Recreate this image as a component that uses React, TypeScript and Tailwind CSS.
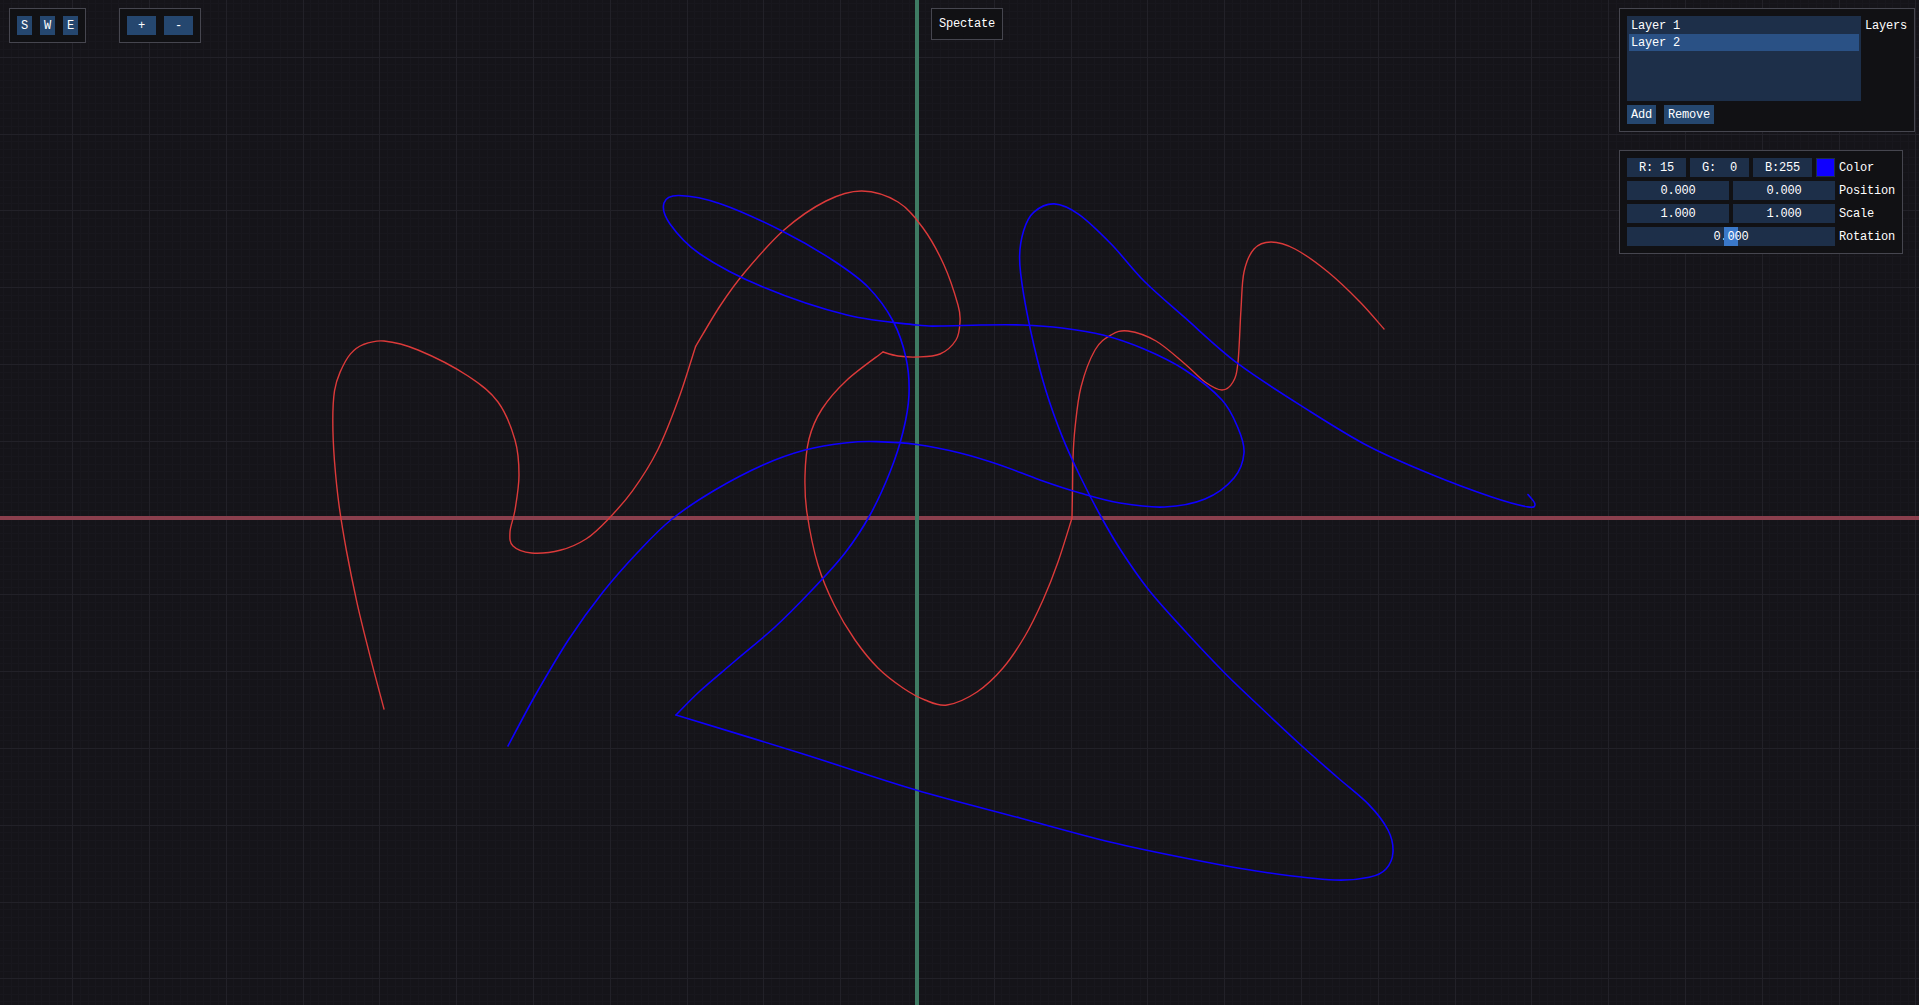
type Pt = [number, number];

// catmull-rom -> cubic bezier, one smooth run of points
function curve(pts: Pt[]): string {
  let d = `M${pts[0][0]} ${pts[0][1]}`;
  for (let i = 0; i < pts.length - 1; i++) {
    const p0 = pts[i - 1] ?? pts[i];
    const p1 = pts[i];
    const p2 = pts[i + 1];
    const p3 = pts[i + 2] ?? p2;
    const c1x = p1[0] + (p2[0] - p0[0]) / 6;
    const c1y = p1[1] + (p2[1] - p0[1]) / 6;
    const c2x = p2[0] - (p3[0] - p1[0]) / 6;
    const c2y = p2[1] - (p3[1] - p1[1]) / 6;
    d += ` C${c1x.toFixed(1)} ${c1y.toFixed(1)} ${c2x.toFixed(1)} ${c2y.toFixed(1)} ${p2[0]} ${p2[1]}`;
  }
  return d;
}

const OX = 917;
const OY = 518;
const STEP = 76.8;

const redStroke: Pt[][] = [
  [
    [384, 709], [369.4, 653.6], [356.8, 601.8], [346.3, 550], [339.1, 505.6], [334.5, 461.2],
    [332.8, 420.5], [334.5, 390.9], [340, 372.4], [350.5, 353.9], [363.1, 344.6], [384, 341],
    [418, 350], [468, 376], [498, 402], [515, 440], [519, 475], [515, 510], [510, 532],
    [513, 546], [531.5, 553], [561, 550], [586, 539], [607, 520.4], [632.5, 490.8],
    [657.7, 450], [678.8, 398.3], [695.6, 346.5],
  ],
  [
    [695.6, 346.5], [720, 306], [745, 272], [784, 230], [826, 201], [862, 191], [898, 202],
    [923, 228], [944, 265], [958, 305], [960, 322], [956, 340], [940, 354], [917, 357],
    [898, 356], [883, 352],
  ],
  [
    [883, 352], [847, 380], [822, 409], [809, 439], [805, 476], [807, 513], [818, 565],
    [834.5, 605.5], [855, 640], [878, 668], [903, 688], [925, 700], [947, 705], [977, 692],
    [1003, 668], [1025, 636], [1043, 600], [1058, 562], [1072, 518],
  ],
  [
    [1072, 518], [1072.5, 490], [1073, 458], [1075, 428], [1081, 387], [1095, 350], [1111, 335],
    [1128, 331], [1156, 341], [1185, 364], [1205, 382], [1222, 390], [1233, 382], [1238, 362],
    [1241, 309], [1244, 272], [1254, 249], [1271, 242], [1295, 249], [1328, 272], [1360, 302],
    [1384, 329],
  ],
];

const blueStroke: Pt[][] = [
  [
    [508, 746], [536, 694], [569, 639], [603, 592], [638, 552], [672, 519], [715, 490],
    [763, 465], [805, 450], [847, 442.7], [876.6, 441.6], [917, 444.5], [960, 453],
    [1000, 465], [1040, 480], [1080, 493], [1120, 503], [1164.5, 507], [1205, 499],
    [1234, 478], [1244, 453], [1238, 428], [1222, 400], [1185, 370], [1144, 349], [1103, 335],
    [1062, 328], [1022, 325], [981, 325], [940, 326], [917, 325], [847, 315], [763, 287],
    [700, 254], [670, 224], [664, 203], [679, 195.5], [721, 204], [784, 232], [834, 261],
    [868, 287], [893, 321], [906, 358], [909, 394.6], [903, 432], [890, 472], [870, 515],
    [845, 553], [812, 590], [775, 627], [735, 661], [700, 691], [676, 715],
  ],
  [
    [676, 715], [800, 753], [916, 790], [1020, 818], [1110, 842], [1190, 859], [1263, 872],
    [1335, 880], [1370, 877], [1386, 869], [1393, 852], [1388, 830], [1368.6, 804.4],
    [1337, 777], [1303, 747], [1266.5, 713], [1225.7, 674], [1185, 631],
    [1148, 589], [1120, 549], [1099, 513], [1080, 476], [1062.4, 437.1],
    [1046.1, 391.2], [1033.9, 345.3], [1023.7, 294.8], [1019.6, 258], [1023.7, 230.5],
    [1033.9, 212.1], [1054.3, 203.9], [1078.8, 214.4], [1111.4, 244.3], [1144, 281],
    [1184.9, 317.7], [1238, 363.7], [1307.3, 409.6], [1368.6, 446.3], [1429.8, 473.8],
    [1491, 496.8], [1527.8, 506.9], [1535, 504], [1528, 494.5],
  ],
];

function Canvas() {
  const majorX: number[] = [];
  const majorY: number[] = [];
  const minorX: number[] = [];
  const minorY: number[] = [];
  for (let k = -12; k <= 14; k++) majorX.push(Math.round(OX + k * STEP) + 0.5);
  for (let k = -7; k <= 7; k++) majorY.push(Math.round(OY - 0.5 + k * STEP) + 0.5);
  for (let k = -120; k <= 132; k++) if (k % 10 !== 0) minorX.push(Math.round(OX + (k * STEP) / 10) + 0.5);
  for (let k = -70; k <= 70; k++) if (k % 10 !== 0) minorY.push(Math.round(OY - 0.5 + (k * STEP) / 10) + 0.5);

  return (
    <svg className="absolute inset-0" width={1919} height={1005} viewBox="0 0 1919 1005">
      <g stroke="#18171d" strokeWidth={1} shapeRendering="crispEdges">
        {minorX.map((x) => (
          <line key={"mx" + x} x1={x} y1={0} x2={x} y2={1005} />
        ))}
        {minorY.map((y) => (
          <line key={"my" + y} x1={0} y1={y} x2={1919} y2={y} />
        ))}
      </g>
      <g stroke="#222128" strokeWidth={1} shapeRendering="crispEdges">
        {majorX.map((x) => (
          <line key={"x" + x} x1={x} y1={0} x2={x} y2={1005} />
        ))}
        {majorY.map((y) => (
          <line key={"y" + y} x1={0} y1={y} x2={1919} y2={y} />
        ))}
      </g>
      {/* axes */}
      <rect x={0} y={OY - 2} width={1919} height={4} fill="#8a3f4d" />
      <rect x={OX - 2} y={0} width={4} height={1005} fill="#3e7b63" />
      {/* strokes */}
      <g fill="none" strokeLinecap="round" strokeLinejoin="round">
        {redStroke.map((s, i) => (
          <path key={"r" + i} d={curve(s)} stroke="#dc3a3a" strokeWidth={1.4} />
        ))}
        {blueStroke.map((s, i) => (
          <path key={"b" + i} d={curve(s)} stroke="#0f00ff" strokeWidth={1.6} />
        ))}
      </g>
    </svg>
  );
}

function Btn({ label, w }: { label: string; w: string }) {
  return (
    <div className={`${w} h-[19px] pt-[2px] flex items-center justify-center bg-[#25476f] text-white`}>
      {label}
    </div>
  );
}

function Field({ children, w }: { children: React.ReactNode; w: string }) {
  return (
    <div className={`${w} h-[19px] pt-[2px] flex items-center justify-center bg-[#1d2f49] text-white whitespace-pre`}>
      {children}
    </div>
  );
}

export default function App() {
  return (
    <div className="relative w-[1919px] h-[1005px] overflow-hidden bg-[#151419] font-['Liberation_Mono',monospace] text-[12px] tracking-[-0.2px] leading-[13px] text-white">
      <Canvas />

      {/* tool window */}
      <div className="absolute left-[9px] top-[8px] flex gap-[8px] border border-[#46464f] bg-[#111114] p-[7px]">
        <Btn label="S" w="w-[15px]" />
        <Btn label="W" w="w-[15px]" />
        <Btn label="E" w="w-[15px]" />
      </div>

      {/* zoom window */}
      <div className="absolute left-[119px] top-[8px] flex gap-[8px] border border-[#46464f] bg-[#111114] p-[7px]">
        <Btn label="+" w="w-[29px]" />
        <Btn label="-" w="w-[29px]" />
      </div>

      {/* mode */}
      <div className="absolute left-[931px] top-[8px] flex h-[32px] items-center border border-[#46464f] bg-[#111114] px-[7px] pt-[1px]">
        Spectate
      </div>

      {/* layers */}
      <div className="absolute left-[1619px] top-[8px] flex gap-[4px] border border-[#46464f] bg-[#111114] p-[7px]">
        <div className="flex flex-col gap-[4px]">
          <div className="flex h-[85px] w-[234px] flex-col bg-[#1d2f49] px-[2px] pt-[1px]">
            <div className="h-[17px] px-[2px] pt-[1px] leading-[17px]">Layer 1</div>
            <div className="h-[17px] bg-[#2a5185] px-[2px] pt-[1px] leading-[17px]">Layer 2</div>
          </div>
          <div className="flex gap-[8px]">
            <Btn label="Add" w="w-[29px]" />
            <Btn label="Remove" w="w-[50px]" />
          </div>
        </div>
        <div className="mt-[2px] leading-[17px]">Layers</div>
      </div>

      {/* properties */}
      <div className="absolute left-[1619px] top-[150px] flex flex-col gap-[4px] border border-[#46464f] bg-[#111114] p-[7px]">
        <div className="flex items-center gap-[4px]">
          <Field w="w-[59px]">R: 15</Field>
          <Field w="w-[59px]">G:  0</Field>
          <Field w="w-[59px]">B:255</Field>
          <div className="h-[19px] w-[19px] border border-[#1d2f49] bg-[#0f00ff]" />
          <span className="pt-[2px]">Color</span>
        </div>
        <div className="flex items-center gap-[4px]">
          <Field w="w-[102px]">0.000</Field>
          <Field w="w-[102px]">0.000</Field>
          <span className="pt-[2px]">Position</span>
        </div>
        <div className="flex items-center gap-[4px]">
          <Field w="w-[102px]">1.000</Field>
          <Field w="w-[102px]">1.000</Field>
          <span className="pt-[2px]">Scale</span>
        </div>
        <div className="flex items-center gap-[4px]">
          <div className="flex h-[19px] w-[208px] items-stretch justify-center bg-[#1d2f49] text-white">
            <span className="pt-[4px]">0.</span>
            <span className="-mx-[3px] bg-[#3a78c9] px-[3px] pt-[4px]">0</span>
            <span className="pt-[4px]">00</span>
          </div>
          <span className="pt-[2px]">Rotation</span>
        </div>
      </div>
    </div>
  );
}
